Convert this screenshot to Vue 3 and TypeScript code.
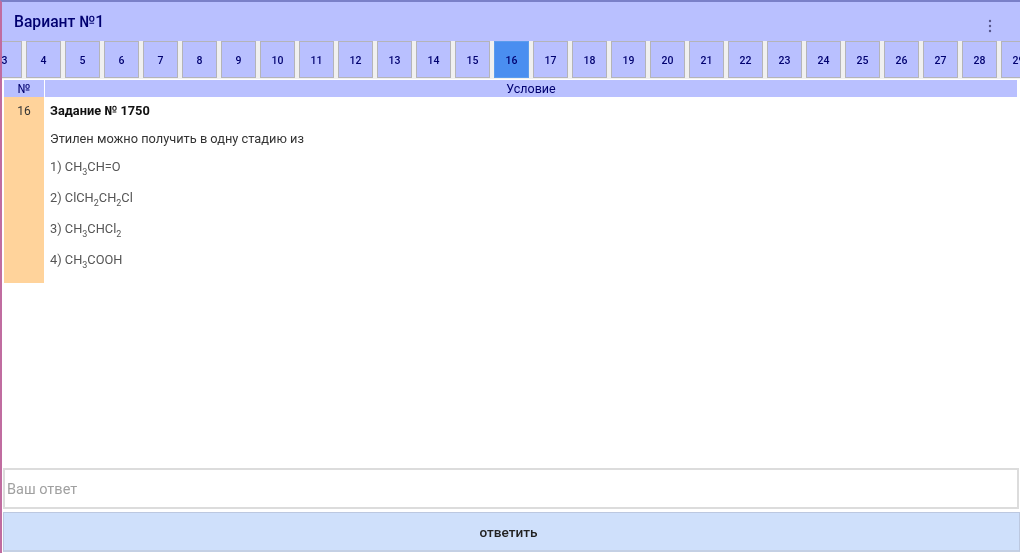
<script setup lang="ts">
const tabs: number[] = Array.from({ length: 27 }, (_, i) => i + 3)
const active = 16
const options = [
  { n: '1)', parts: [['CH', '3'], ['CH=O', '']] },
  { n: '2)', parts: [['ClCH', '2'], ['CH', '2'], ['Cl', '']] },
  { n: '3)', parts: [['CH', '3'], ['CHCl', '2']] },
  { n: '4)', parts: [['CH', '3'], ['COOH', '']] }
]
</script>

<template>
  <div class="screen">
    <header class="appbar">
      <h1 class="title">Вариант №1</h1>
      <svg class="more" width="4" height="14" viewBox="0 0 4 14" aria-hidden="true">
        <circle cx="2" cy="2" r="1.2" />
        <circle cx="2" cy="7" r="1.2" />
        <circle cx="2" cy="12" r="1.2" />
      </svg>
    </header>

    <nav class="tabs">
      <div v-for="t in tabs" :key="t" class="tab" :class="{ active: t === active }">{{ t }}</div>
    </nav>

    <div class="table">
      <div class="head num">№</div>
      <div class="head">Условие</div>
      <div class="num-cell">16</div>
      <div class="task">
        <p class="task-title">Задание № 1750</p>
        <p class="question">Этилен можно получить в одну стадию из</p>
        <p v-for="o in options" :key="o.n" class="option">
          {{ o.n }}
          <template v-for="(p, i) in o.parts" :key="i">{{ p[0] }}<sub v-if="p[1]">{{ p[1] }}</sub></template>
        </p>
      </div>
    </div>

    <div class="spacer"></div>

    <div class="answer">Ваш ответ</div>
    <button class="submit" type="button">ответить</button>
  </div>
</template>

<style scoped>
.screen {
  box-sizing: border-box;
  width: 1020px;
  height: 553px;
  overflow: hidden;
  display: flex;
  flex-direction: column;
  background: #fff;
  border-left: 2px solid #c06ca0;
  border-top: 2px solid #7a80c8;
  font-family: Roboto, "Liberation Sans", sans-serif;
  filter: blur(0.6px);
}
.appbar {
  flex: none;
  height: 39px;
  display: flex;
  align-items: center;
  justify-content: space-between;
  padding: 0 28px 0 12px;
  background: #b9c0ff;
}
.title {
  margin: 0;
  font-size: 15.7px;
  font-weight: 500;
  color: #000070;
}
.more {
  fill: #55558c;
  margin-top: 8px;
}
.tabs {
  flex: none;
  height: 38px;
  display: flex;
  gap: 4px;
  margin-left: -15px;
  background: #f0f0f0;
}
.tab {
  box-sizing: border-box;
  flex: none;
  width: 35px;
  height: 37px;
  padding-top: 1px;
  display: flex;
  align-items: center;
  justify-content: center;
  background: #b9c0ff;
  border: 1px solid #b4b4b8;
  font-size: 10.5px;
  font-weight: 500;
  color: #000070;
}
.tab.active {
  background: #4a8ef0;
  border-color: #5c9cec;
}
.table {
  flex: none;
  display: grid;
  grid-template-columns: 40px 972px;
  column-gap: 1px;
  padding: 1px 0 0 2px;
}
.head {
  height: 17px;
  line-height: 17px;
  text-align: center;
  background: #b9c0ff;
  font-size: 12.5px;
  color: #000070;
}
.num-cell {
  height: 186px;
  padding-top: 7px;
  box-sizing: border-box;
  text-align: center;
  background: #ffd39b;
  font-size: 12px;
  color: #333;
}
.task {
  padding: 7px 0 0 5px;
  font-size: 12.8px;
  color: #444;
}
.task p {
  margin: 0;
}
.task-title {
  font-weight: 700;
  color: #111;
  line-height: 14px;
  margin-bottom: 14px !important;
}
.question {
  line-height: 14px;
  margin-bottom: 14px !important;
  color: #333;
}
.option {
  height: 31px;
  line-height: 14px;
  color: #555;
}
.option sub {
  font-size: 9px;
  line-height: 0;
}
.spacer {
  flex: 1;
}
.answer {
  flex: none;
  box-sizing: border-box;
  height: 41px;
  margin: 0 0 3px 1px;
  width: 1016px;
  padding: 2px 0 0 2px;
  display: flex;
  align-items: center;
  background: #fff;
  border: 2px solid #dcdcdc;
  font-size: 14.5px;
  color: #a0a0a0;
}
.submit {
  flex: none;
  box-sizing: border-box;
  height: 40px;
  margin: 0 0 1px 1px;
  width: 1017px;
  padding: 0 6px 0 0;
  background: #cfe0fb;
  border: 1px solid #bcc8e0;
  border-bottom: 2px solid #c4d0e4;
  font-family: inherit;
  font-size: 13.6px;
  font-weight: 500;
  color: #222;
}
</style>
